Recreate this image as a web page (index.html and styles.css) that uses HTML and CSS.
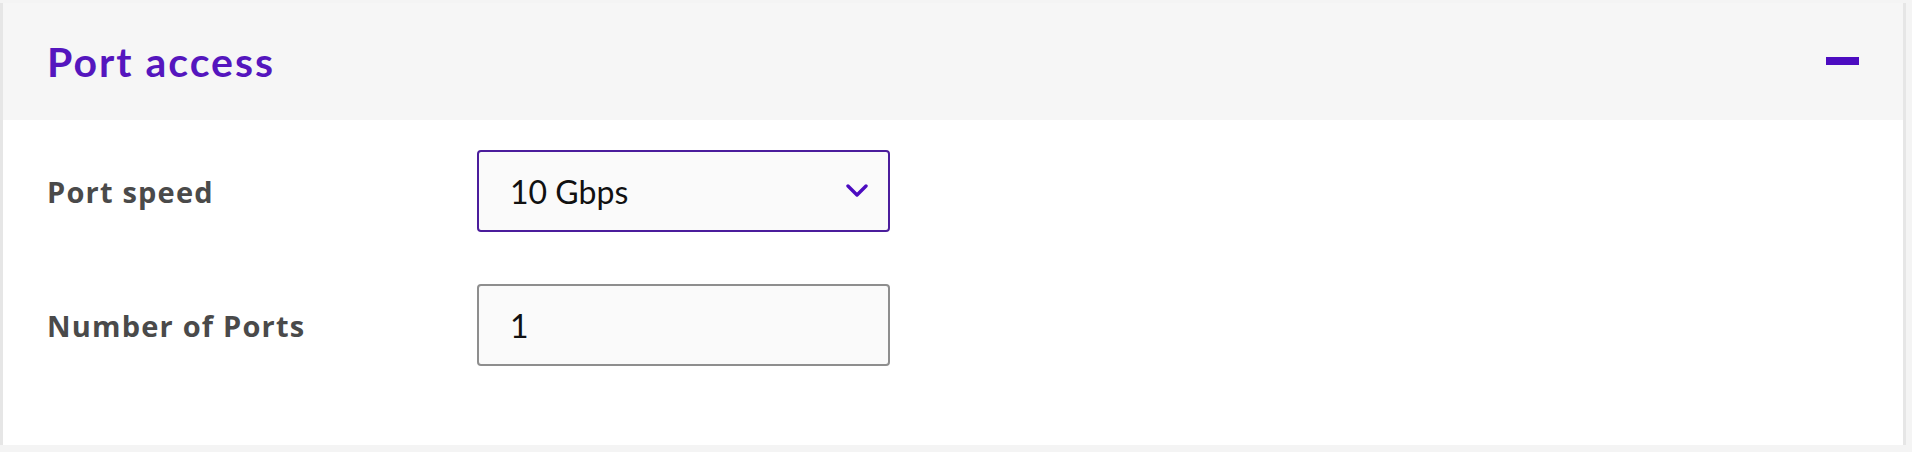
FILE: index.html
```html
<!DOCTYPE html>
<html lang="en">
<head>
<meta charset="utf-8">
<title>Port access</title>
<link rel="stylesheet" href="styles.css">
</head>
<body>
<section class="panel">
  <header class="panel-head">
    <h2 class="panel-title">Port access</h2>
    <span class="collapse-icon" aria-label="Collapse"></span>
  </header>
  <div class="panel-body">
    <div class="field-row">
      <label class="field-label">Port speed</label>
      <div class="select-box">
        <span class="select-value">10 Gbps</span>
        <svg class="chevron" width="22" height="14" viewBox="0 0 22 14" aria-hidden="true">
          <path d="M2 2 L11 11 L20 2" fill="none" stroke="#4c0cc0" stroke-width="3.4" stroke-linecap="round" stroke-linejoin="round"/>
        </svg>
      </div>
    </div>
    <div class="field-row">
      <label class="field-label">Number of Ports</label>
      <div class="text-box">
        <span class="select-value">1</span>
      </div>
    </div>
  </div>
</section>
</body>
</html>
```

FILE: styles.css
```css
html, body {
  margin: 0;
  padding: 0;
}
body {
  background: #f4f4f4;
  width: 1912px;
  height: 452px;
  overflow: hidden;
  font-family: Lato, "Open Sans", sans-serif;
}
.panel {
  margin-top: 3px;
  width: 1900px;
  border-left: 3px solid #e6e6e6;
  border-right: 3px solid #e6e6e6;
  background: #ffffff;
}
.panel-head {
  height: 117px;
  background: #f6f6f6;
  display: flex;
  align-items: center;
  justify-content: space-between;
  padding: 0 44px 0 44px;
}
.panel-title {
  margin: 0;
  font-size: 41px;
  font-weight: 700;
  letter-spacing: 2px;
  color: #5516be;
  line-height: 1;
}
.collapse-icon {
  width: 33px;
  height: 8px;
  background: #4c0cc0;
  margin-top: -2px;
}
.panel-body {
  padding: 30px 0 79px 44px;
  display: flex;
  flex-direction: column;
  gap: 52px;
}
.field-row {
  display: flex;
  align-items: center;
}
.field-label {
  width: 430px;
  font-family: "Open Sans", Lato, sans-serif;
  font-size: 29px;
  font-weight: 700;
  color: #4a4a4a;
  letter-spacing: 1.2px;
}
.select-box,
.text-box {
  box-sizing: border-box;
  width: 413px;
  height: 82px;
  border-radius: 4px;
  background: #fafafa;
  display: flex;
  align-items: center;
  justify-content: space-between;
  padding: 0 20px 0 31px;
}
.select-box {
  border: 2px solid #4b1d9c;
}
.text-box {
  border: 2px solid #8e8e8e;
}
.select-value {
  font-size: 32px;
  color: #111111;
  font-weight: 400;
  letter-spacing: 0;
}
.chevron {
  display: block;
}
```
